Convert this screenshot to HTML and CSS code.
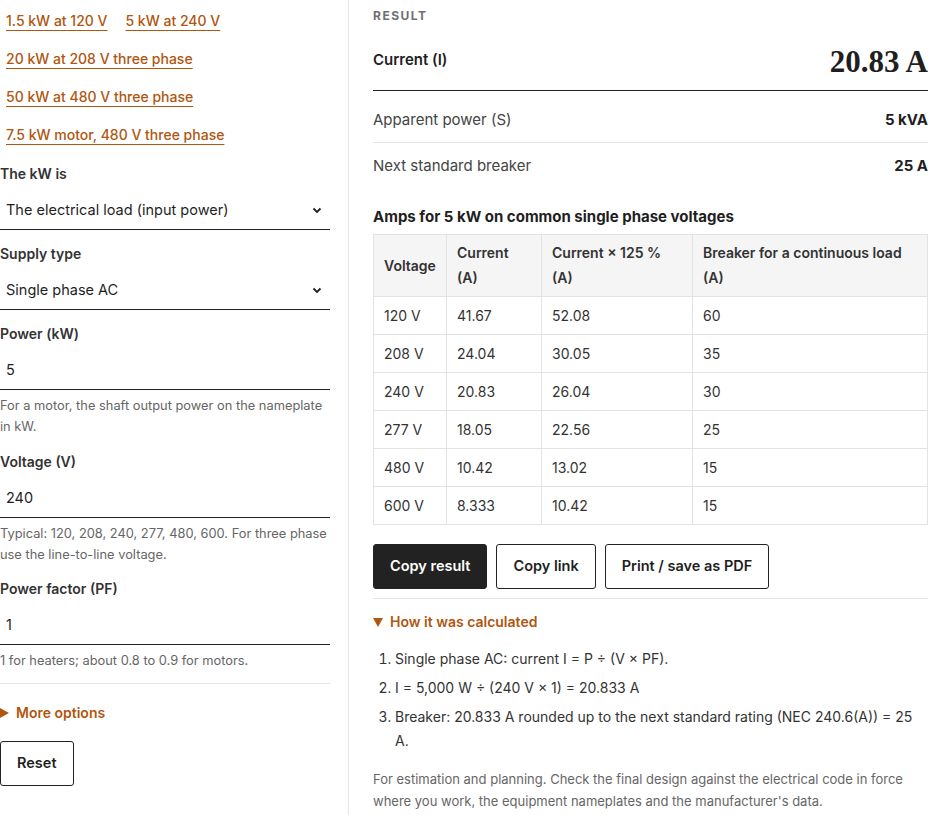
FILE: index.html
```html
<!DOCTYPE html>
<html lang="en">
<head>
    <meta charset="UTF-8">
    <meta name="viewport" content="width=device-width, initial-scale=1.0">
    <title>kW to Amps Calculator</title>
    <link rel="stylesheet" href="styles.css">
</head>
<body>

<div class="page">

    <aside class="inputs">
        <div class="presets">
            <a href="#">1.5 kW at 120 V</a>
            <a href="#">5 kW at 240 V</a>
            <a href="#">20 kW at 208 V three phase</a>
            <a href="#">50 kW at 480 V three phase</a>
            <a href="#">7.5 kW motor, 480 V three phase</a>
        </div>

        <div class="fields">
            <div class="field">
                <label>The kW is</label>
                <div class="control select">
                    <span>The electrical load (input power)</span>
                    <svg width="10" height="7" viewBox="0 0 10 7"><polyline points="1.5,1.5 5,5 8.5,1.5" fill="none" stroke="#222" stroke-width="1.8"/></svg>
                </div>
            </div>

            <div class="field">
                <label>Supply type</label>
                <div class="control select">
                    <span>Single phase AC</span>
                    <svg width="10" height="7" viewBox="0 0 10 7"><polyline points="1.5,1.5 5,5 8.5,1.5" fill="none" stroke="#222" stroke-width="1.8"/></svg>
                </div>
            </div>

            <div class="field">
                <label>Power (kW)</label>
                <div class="control">5</div>
                <p class="hint">For a motor, the shaft output power on the nameplate in kW.</p>
            </div>

            <div class="field">
                <label>Voltage (V)</label>
                <div class="control">240</div>
                <p class="hint">Typical: 120, 208, 240, 277, 480, 600. For three phase use the line-to-line voltage.</p>
            </div>

            <div class="field">
                <label>Power factor (PF)</label>
                <div class="control">1</div>
                <p class="hint">1 for heaters; about 0.8 to 0.9 for motors.</p>
            </div>
        </div>

        <hr class="rule">

        <div class="toggle closed">More options</div>

        <button class="btn">Reset</button>
    </aside>

    <main class="results">
        <div class="eyebrow">Result</div>

        <div class="main-row">
            <span class="main-label">Current (I)</span>
            <span class="main-value">20.83 A</span>
        </div>
        <div class="row first">
            <span>Apparent power (S)</span>
            <strong>5 kVA</strong>
        </div>
        <div class="row last">
            <span>Next standard breaker</span>
            <strong>25 A</strong>
        </div>

        <h3>Amps for 5 kW on common single phase voltages</h3>
        <table>
            <thead>
                <tr>
                    <th class="c1">Voltage</th>
                    <th class="c2">Current<br>(A)</th>
                    <th class="c3">Current × 125 %<br>(A)</th>
                    <th>Breaker for a continuous load<br>(A)</th>
                </tr>
            </thead>
            <tbody>
                <tr><td>120 V</td><td>41.67</td><td>52.08</td><td>60</td></tr>
                <tr><td>208 V</td><td>24.04</td><td>30.05</td><td>35</td></tr>
                <tr><td>240 V</td><td>20.83</td><td>26.04</td><td>30</td></tr>
                <tr><td>277 V</td><td>18.05</td><td>22.56</td><td>25</td></tr>
                <tr><td>480 V</td><td>10.42</td><td>13.02</td><td>15</td></tr>
                <tr><td>600 V</td><td>8.333</td><td>10.42</td><td>15</td></tr>
            </tbody>
        </table>

        <div class="actions">
            <button class="btn dark">Copy result</button>
            <button class="btn">Copy link</button>
            <button class="btn">Print / save as PDF</button>
        </div>

        <hr class="rule">

        <div class="toggle open">How it was calculated</div>
        <ol class="steps">
            <li>Single phase AC: current I = P ÷ (V × PF).</li>
            <li>I = 5,000 W ÷ (240 V × 1) = 20.833 A</li>
            <li>Breaker: 20.833 A rounded up to the next standard rating (NEC 240.6(A)) = 25 A.</li>
        </ol>

        <p class="note">For estimation and planning. Check the final design against the electrical code in force where you work, the equipment nameplates and the manufacturer's data.</p>
    </main>

</div>

</body>
</html>
```

FILE: styles.css
```css
body {
    margin: 0;
    background: #ffffff;
    color: #1f1f1f;
    font-family: Inter, "Liberation Sans", sans-serif;
    font-size: 14px;
    overflow: hidden;
}
.page {
    display: grid;
    grid-template-columns: 330px 1fr;
    column-gap: 18px;
    min-height: 815px;
}

/* left column */
.presets {
    display: flex;
    flex-wrap: wrap;
    gap: 6px;
    padding-top: 5px;
}
.presets a {
    display: inline-block;
    padding: 6px;
    line-height: 20px;
    color: #b0560f;
    font-weight: 500;
    font-size: 14px;
    text-decoration: underline;
    text-underline-offset: 4px;
}
.fields {
    margin-top: 13px;
}
.field {
    padding-bottom: 14px;
}
.field:last-child {
    padding-bottom: 0;
}
.field label {
    display: block;
    line-height: 20px;
    font-weight: 600;
    font-size: 14px;
    color: #333;
    margin-bottom: 5px;
}
.control {
    display: flex;
    align-items: center;
    justify-content: space-between;
    padding: 11px 6px 9px;
    line-height: 20px;
    font-size: 14.5px;
    color: #1f1f1f;
    border-bottom: 1px solid #222;
}
.select svg {
    margin-right: 2px;
}
.hint {
    margin: 5px 0 0.5px;
    font-size: 12.85px;
    line-height: 21px;
    color: #666;
}
.rule {
    border: none;
    border-top: 1px solid #e6e6e6;
    margin: 12px 0 19px;
}
.toggle {
    line-height: 20px;
    font-weight: 600;
    font-size: 14px;
    color: #b0560f;
    display: flex;
    align-items: center;
}
.toggle::before {
    content: "";
    display: inline-block;
    margin-right: 7px;
    border-style: solid;
}
.toggle.closed::before {
    border-width: 5px 0 5px 9px;
    border-color: transparent transparent transparent #b0560f;
}
.toggle.open::before {
    border-width: 9px 5px 0 5px;
    border-color: #b0560f transparent transparent transparent;
}
.inputs .btn {
    margin-top: 18px;
}
.btn {
    font-family: inherit;
    font-size: 14.5px;
    font-weight: 600;
    line-height: 20px;
    padding: 11px 16px 12px;
    background: #fff;
    color: #1f1f1f;
    border: 1px solid #222;
    border-radius: 3px;
}
.btn.dark {
    background: #222;
    color: #fff;
}

/* right column */
.results {
    border-left: 1px solid #e6e6e6;
    padding-left: 24px;
    padding-top: 8px;
}
.eyebrow {
    font-size: 12px;
    line-height: 16px;
    font-weight: 700;
    letter-spacing: 1.5px;
    text-transform: uppercase;
    color: #707070;
}
.main-row {
    display: flex;
    justify-content: space-between;
    align-items: center;
    margin-top: 14px;
    padding-bottom: 10px;
    border-bottom: 1px solid #222;
}
.main-label {
    font-weight: 600;
    font-size: 15px;
}
.main-value {
    font-family: "Liberation Serif", serif;
    font-weight: 700;
    font-size: 31px;
    line-height: 36px;
    margin-top: 6px;
}
.row {
    display: flex;
    justify-content: space-between;
    padding: 12px 0;
    line-height: 22px;
    font-size: 15px;
    color: #444;
    border-bottom: 1px solid #e6e6e6;
}
.row.first {
    margin-top: 5px;
    padding: 13px 0 11px;
}
.row strong {
    color: #1f1f1f;
    font-weight: 700;
}
.row.last {
    border-bottom: none;
}
h3 {
    margin: 16px 0 5px;
    font-size: 15px;
    line-height: 24px;
    font-weight: 700;
}
table {
    width: 100%;
    border-collapse: collapse;
    font-size: 14px;
}
th, td {
    border: 1px solid #e3e3e3;
    padding: 6px 10px;
    line-height: 25px;
    text-align: left;
    color: #333;
}
th {
    background: #f5f5f5;
    font-weight: 600;
    vertical-align: middle;
    padding: 5px 10px 6px;
}
.c1 { width: 52px; }
.c2 { width: 74px; }
.c3 { width: 130px; }
.actions {
    display: flex;
    gap: 9px;
    margin-top: 19px;
}
.results .rule {
    margin: 9px 0 13px;
}
.steps {
    margin: 15px 0 0;
    padding-left: 22px;
    font-size: 14px;
    line-height: 24px;
    color: #333;
}
.steps li {
    margin-bottom: 5px;
}
.note {
    margin: 15px 0 0;
    font-size: 13px;
    line-height: 22px;
    color: #666;
}
```
